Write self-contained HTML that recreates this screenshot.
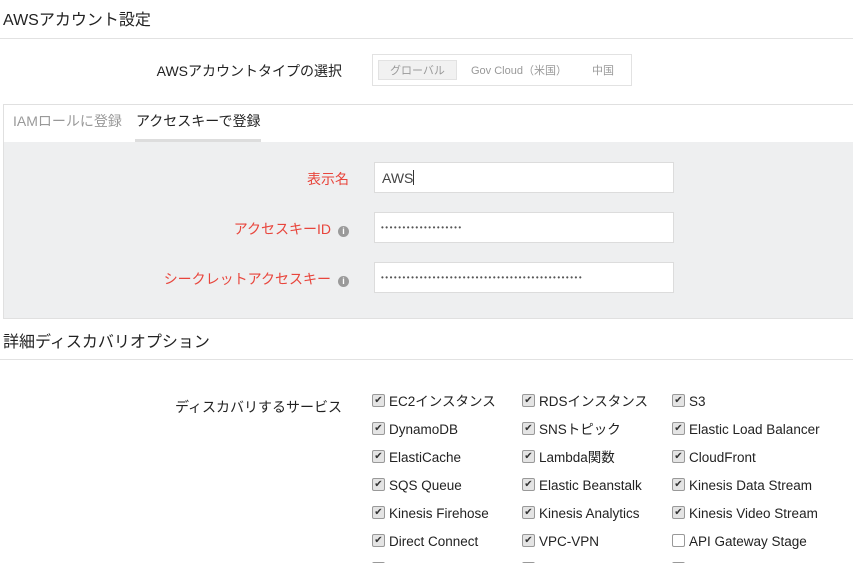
<!DOCTYPE html><html><head><meta charset="utf-8"><style>
html,body{margin:0;width:853px;height:563px;overflow:hidden}
body{background:#fff;font-family:"Liberation Sans","Noto Sans CJK JP",sans-serif;color:#222;position:relative}
.a{position:absolute;white-space:nowrap;line-height:18px}
.inp{position:absolute;left:374px;width:300px;height:31px;background:#fff;border:1px solid #dcdcdc;box-sizing:border-box}
.lab{position:absolute;right:504px;font-size:14px;color:#e8453c;white-space:nowrap;line-height:18px}
.info{display:inline-block;width:11px;height:11px;border-radius:50%;background:#9a9a9a;color:#fff;font-size:9px;line-height:11px;text-align:center;font-weight:bold;margin-left:7px;vertical-align:0px}
.cb{position:absolute;width:11px;height:11px;border:1px solid #999;border-radius:2px;background:#e4e4e4;font-size:10px;line-height:11px;text-align:center;color:#333}
.ct{position:absolute;font-size:13.5px;white-space:nowrap;color:#222;line-height:18px}
.dots{position:absolute;left:381px;font-size:8px;letter-spacing:1.5px;color:#555;line-height:10px;white-space:nowrap}
</style></head><body>
<div class="a" style="left:3px;top:12px;font-size:16px">AWSアカウント設定</div>
<div class="a" style="left:0;top:38px;width:853px;height:1px;background:#e2e2e2"></div>
<div class="a" style="right:511px;top:62px;font-size:14px">AWSアカウントタイプの選択</div>
<div class="a" style="left:372px;top:54px;width:258px;height:30px;border:1px solid #e2e2e2"></div>
<div class="a" style="left:378px;top:60px;width:79px;height:20px;background:#f1f1f1;border:1px solid #e2e2e2;box-sizing:border-box"></div>
<div class="a" style="left:390px;top:62px;font-size:11px;color:#999">グローバル</div>
<div class="a" style="left:471px;top:62px;font-size:11px;color:#999">Gov Cloud（米国）</div>
<div class="a" style="left:592px;top:62px;font-size:11px;color:#999">中国</div>
<div class="a" style="left:3px;top:104px;width:852px;height:213px;border:1px solid #e0e0e0;background:#eeeff0"></div>
<div class="a" style="left:4px;top:105px;width:852px;height:37px;background:#fff"></div>
<div class="a" style="left:13px;top:112px;font-size:14px;color:#999">IAMロールに登録</div>
<div class="a" style="left:136px;top:112px;font-size:14px;color:#222">アクセスキーで登録</div>
<div class="a" style="left:135px;top:139px;width:126px;height:3px;background:#ddd"></div>
<div class="lab" style="top:170px">表示名</div>
<div class="lab" style="top:220px">アクセスキーID<span class="info">i</span></div>
<div class="lab" style="top:270px">シークレットアクセスキー<span class="info">i</span></div>
<div class="inp" style="top:162px"></div>
<div class="a" style="left:382px;top:169px;font-size:14px;color:#444">AWS<span style="display:inline-block;width:1px;height:15px;background:#333;vertical-align:-2px"></span></div>
<div class="inp" style="top:212px"></div>
<div class="dots" style="top:223px">•••••••••••••••••••</div>
<div class="inp" style="top:262px"></div>
<div class="dots" style="top:273px">•••••••••••••••••••••••••••••••••••••••••••••••</div>
<div class="a" style="left:3px;top:334px;font-size:16px">詳細ディスカバリオプション</div>
<div class="a" style="left:0;top:359px;width:853px;height:1px;background:#e2e2e2"></div>
<div class="a" style="right:511px;top:398px;font-size:14px">ディスカバリするサービス</div>
<div id="g"></div>
<script>
var d=[["EC2インスタンス","RDSインスタンス","S3"],["DynamoDB","SNSトピック","Elastic Load Balancer"],["ElastiCache","Lambda関数","CloudFront"],["SQS Queue","Elastic Beanstalk","Kinesis Data Stream"],["Kinesis Firehose","Kinesis Analytics","Kinesis Video Stream"],["Direct Connect","VPC-VPN","API Gateway Stage"],["","",""]];
var h="",xs=[372,522,672];
d.forEach(function(r,i){r.forEach(function(t,j){var y=394+i*28;var chk=!(i==5&&j==2)&&i<6;
h+='<div class="cb" style="left:'+xs[j]+'px;top:'+y+'px;'+(chk?'':'background:#fff')+'">'+(chk?'✔':'')+'</div>';
if(t)h+='<div class="ct" style="left:'+(xs[j]+17)+'px;top:'+(y-1)+'px">'+t+'</div>';});});
document.getElementById('g').innerHTML=h;
</script>
</body></html>
